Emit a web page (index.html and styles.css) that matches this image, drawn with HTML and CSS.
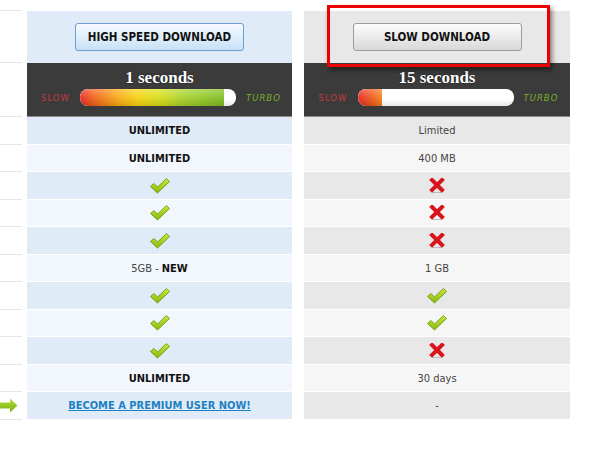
FILE: index.html
```html
<!DOCTYPE html>
<html lang="en">
	<head>
		<meta charset="UTF-8" />
		<title>Download options</title>
		<link rel="stylesheet" href="styles.css">
	</head>
	<body>
		<svg class="defs" width="0" height="0">
			<defs>
				<linearGradient id="chk" x1="0" y1="0" x2="0" y2="1">
					<stop offset="0" stop-color="#c9ea3c" />
					<stop offset="1" stop-color="#86b80e" />
				</linearGradient>
				<linearGradient id="arr" x1="0" y1="0" x2="0" y2="1">
					<stop offset="0" stop-color="#b4e03a" />
					<stop offset="1" stop-color="#78ad12" />
				</linearGradient>
				<symbol id="check" viewBox="0 0 22 18">
					<path d="M1.5 9.5 L5 6.5 L8.5 10 L17.5 1.5 L20.5 4.5 L8.5 16 Z" fill="url(#chk)" stroke="#6f9a0c" stroke-width="0.9" stroke-linejoin="round" />
				</symbol>
				<symbol id="cross" viewBox="0 0 16 16">
					<path d="M3 14.5 H13" stroke="#bbb" stroke-width="1" />
					<path d="M3 2 L13 12 M13 2 L3 12" stroke="#d9141c" stroke-width="4" stroke-linecap="square" />
				</symbol>
			</defs>
		</svg>

		<div class="compare">
			<!-- left edge of the feature names column -->
			<div class="col labels">
				<div class="cell head"></div>
				<div class="cell speed"></div>
				<div class="cell"></div>
				<div class="cell"></div>
				<div class="cell"></div>
				<div class="cell"></div>
				<div class="cell"></div>
				<div class="cell"></div>
				<div class="cell"></div>
				<div class="cell"></div>
				<div class="cell"></div>
				<div class="cell"></div>
				<div class="cell">
					<svg class="go" width="18" height="15" viewBox="0 0 18 15">
						<path d="M0 4.5 H10 V0.5 L17.5 7.5 L10 14.5 V10.5 H0 Z" fill="url(#arr)" />
					</svg>
				</div>
			</div>

			<div class="col premium">
				<div class="cell head">
					<button class="btn btn-fast">HIGH SPEED DOWNLOAD</button>
				</div>
				<div class="cell speed">
					<div class="secs">1 seconds</div>
					<div class="meter">
						<span class="slow">SLOW</span>
						<span class="bar"><span class="fill fill-fast"></span></span>
						<span class="turbo">TURBO</span>
					</div>
				</div>
				<div class="cell"><b>UNLIMITED</b></div>
				<div class="cell"><b>UNLIMITED</b></div>
				<div class="cell"><svg class="ico-check"><use href="#check" /></svg></div>
				<div class="cell"><svg class="ico-check"><use href="#check" /></svg></div>
				<div class="cell"><svg class="ico-check"><use href="#check" /></svg></div>
				<div class="cell"><span>5GB - <b>NEW</b></span></div>
				<div class="cell"><svg class="ico-check"><use href="#check" /></svg></div>
				<div class="cell"><svg class="ico-check"><use href="#check" /></svg></div>
				<div class="cell"><svg class="ico-check"><use href="#check" /></svg></div>
				<div class="cell"><b>UNLIMITED</b></div>
				<div class="cell"><a href="#" class="premium-link">BECOME A PREMIUM USER NOW!</a></div>
			</div>

			<div class="col free">
				<div class="cell head">
					<button class="btn btn-slow">SLOW DOWNLOAD</button>
					<div class="highlight"></div>
				</div>
				<div class="cell speed">
					<div class="secs">15 seconds</div>
					<div class="meter">
						<span class="slow">SLOW</span>
						<span class="bar"><span class="fill fill-slow"></span></span>
						<span class="turbo">TURBO</span>
					</div>
				</div>
				<div class="cell">Limited</div>
				<div class="cell">400 MB</div>
				<div class="cell"><svg class="ico-cross"><use href="#cross" /></svg></div>
				<div class="cell"><svg class="ico-cross"><use href="#cross" /></svg></div>
				<div class="cell"><svg class="ico-cross"><use href="#cross" /></svg></div>
				<div class="cell">1 GB</div>
				<div class="cell"><svg class="ico-check"><use href="#check" /></svg></div>
				<div class="cell"><svg class="ico-check"><use href="#check" /></svg></div>
				<div class="cell"><svg class="ico-cross"><use href="#cross" /></svg></div>
				<div class="cell">30 days</div>
				<div class="cell">-</div>
			</div>
		</div>
	</body>
</html>
```

FILE: styles.css
```css
body {
	margin: 0;
	background: #fff;
	color: #444;
	font-family: "DejaVu Sans Condensed", "DejaVu Sans", sans-serif;
	font-stretch: condensed;
	font-size: 11px;
}

.defs {
	position: absolute;
	width: 0;
	height: 0;
}

.compare {
	display: flex;
	padding-top: 11px;
}

.col {
	display: flex;
	flex-direction: column;
}

.cell {
	display: flex;
	align-items: center;
	justify-content: center;
	box-sizing: border-box;
	height: 27.5px;
	padding-top: 1px;
	border-bottom: 1px solid #fff;
}

.cell b {
	color: #111;
}

.cell.head {
	height: 52px;
	border-bottom: 0;
	align-items: flex-start;
	padding-top: 12px;
	position: relative;
}

.cell.speed {
	border-bottom: 1px solid #8a8a8a;
	background: #3b3b3b;
	flex-direction: column;
	justify-content: flex-start;
	padding-top: 6px;
	height: 54px;
}

/* label column */
.labels {
	width: 22px;
	margin-top: -1px;
	border-top: 1px solid #e6e6e6;
}

.labels .cell {
	border-bottom: 1px solid #e6e6e6;
	justify-content: flex-start;
}

.labels .cell.head {
	border-bottom: 1px solid #e6e6e6;
}

.labels .cell.speed {
	background: #fff;
	border-bottom: 1px solid #e6e6e6;
}

/* product columns */
.premium {
	width: 265px;
	margin-left: 5px;
}

.free {
	width: 266px;
	margin-left: 12px;
}

.premium .cell:nth-child(even) {
	background: #f1f7fd;
}

.premium .cell:nth-child(odd),
.premium .cell.head {
	background: #dfecf8;
}

.free .cell:nth-child(even) {
	background: #f6f6f6;
}

.free .cell:nth-child(odd),
.free .cell.head {
	background: #e8e8e8;
}

.premium .cell.speed,
.free .cell.speed {
	background: #3b3b3b;
}

.btn {
	width: 169px;
	height: 28px;
	border-radius: 3px;
	font-family: inherit;
	font-stretch: condensed;
	font-size: 11.5px;
	font-weight: bold;
	color: #111;
	cursor: pointer;
	padding: 0;
}

.btn-fast {
	border: 1px solid #6e9dcf;
	background: linear-gradient(#f4f9fe, #e2f0fb 45%, #c6e1f6);
}

.btn-slow {
	border: 1px solid #9c9c9c;
	background: linear-gradient(#fbfbfb, #ededed 45%, #d8d8d8);
}

.highlight {
	position: absolute;
	left: 23px;
	top: -6px;
	width: 223px;
	height: 62px;
	box-sizing: border-box;
	border: 3px solid #ec0000;
	box-shadow: 2px 3px 5px rgba(0, 0, 0, 0.5);
}

.secs {
	font-family: "Liberation Serif", serif;
	font-weight: bold;
	font-size: 17px;
	line-height: 18px;
	color: #fff;
	text-shadow: 0 0 2px rgba(0, 0, 0, 0.6);
	font-stretch: normal;
}

.meter {
	display: flex;
	align-items: center;
	gap: 10px;
	margin-top: 2px;
}

.slow,
.turbo {
	font-family: "DejaVu Sans", sans-serif;
	font-stretch: normal;
	font-size: 8.5px;
	letter-spacing: 1px;
}

.slow {
	color: #c43a45;
	width: 29px;
}

.turbo {
	color: #7ab02a;
	font-style: italic;
	width: 32px;
}

.bar {
	position: relative;
	width: 156px;
	height: 17px;
	border-radius: 8px;
	background: linear-gradient(#fff, #fff 60%, #e6e6e6);
	overflow: hidden;
}

.fill {
	position: absolute;
	left: 0;
	top: 0;
	bottom: 0;
	border-radius: 8px 0 0 8px;
}

.fill::after {
	content: "";
	position: absolute;
	left: 0;
	right: 0;
	top: 0;
	bottom: 0;
	background: linear-gradient(rgba(255, 255, 255, 0.3), rgba(255, 255, 255, 0.1) 45%, rgba(0, 0, 0, 0.12));
}

.fill-fast {
	width: 144px;
	background: linear-gradient(to right, #e8261c, #f36216 10%, #f9a510 25%, #f6d40c 40%, #d8df14 55%, #a6d22a 72%, #7cbd1e 100%);
}

.fill-slow {
	width: 24px;
	background: linear-gradient(to right, #e8261c, #f05a1a 60%, #f6841a);
}

.ico-check {
	width: 22px;
	height: 18px;
}

.ico-cross {
	width: 16px;
	height: 16px;
}

.premium-link {
	color: #1f7fc3;
	font-weight: bold;
	text-decoration: underline;
}
```
